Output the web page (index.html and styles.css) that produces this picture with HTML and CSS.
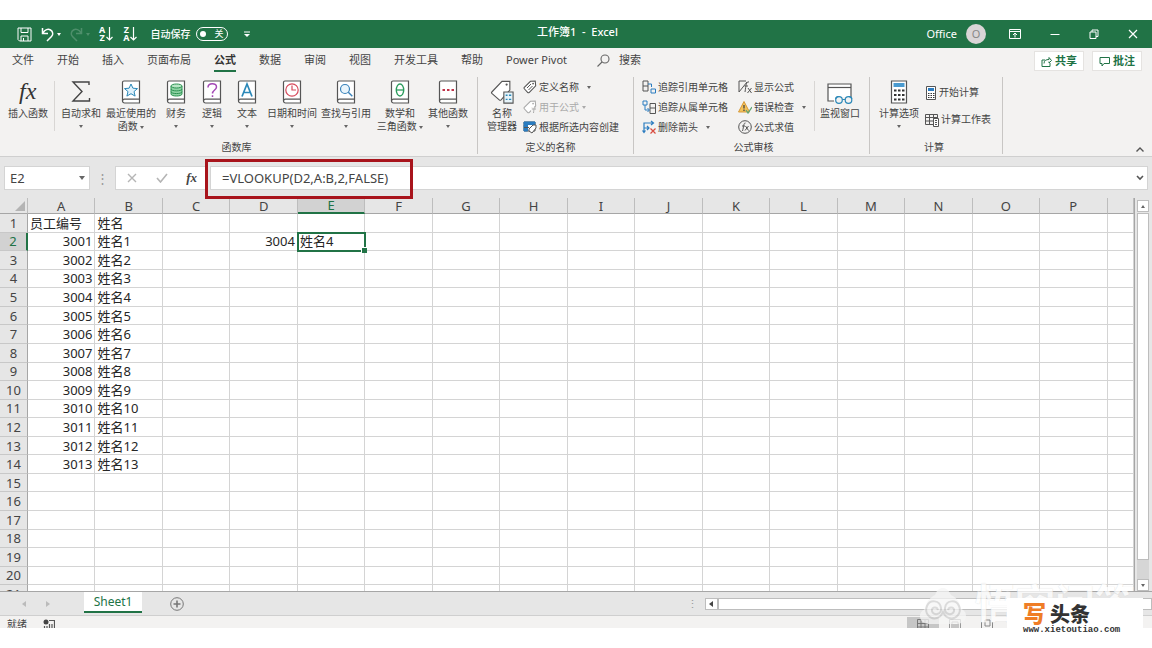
FILE: index.html
```html
<!DOCTYPE html>
<html lang="zh-CN">
<head>
<meta charset="utf-8">
<title>工作簿1 - Excel</title>
<link rel="stylesheet" href="styles.css">
</head>
<body>
<svg class="defs" aria-hidden="true">
  <symbol id="book" viewBox="0 0 20 24"><path d="M1.500 2.500a1.500 1.500 0 0 1 1.500-1.500h15.500v22H3.500a2 2 0 0 1-2-2z" fill="#fff" stroke="#555" stroke-width="1.200"/><path d="M1.500 21a2 2 0 0 1 2-1.800h15" fill="none" stroke="#555" stroke-width="1.200"/></symbol>
  <symbol id="tag" viewBox="0 0 16 16"><path d="M1.500 8.500 8.500 1.500l5.500-.3.500 5.500-7.500 7.600c-.6.500-1 .5-1.500 0L1.500 10c-.5-.5-.5-1 0-1.500z" fill="#fff" stroke="currentColor" stroke-width="1.200"/><circle cx="11.500" cy="4" r="1" fill="currentColor"/></symbol>
</svg>
<main class="app">
  <header class="titlebar">
    <div class="quick">
      <button class="tb" aria-label="保存"><svg width="15" height="15" viewBox="0 0 15 15" fill="none" stroke="#fff"><path d="M1 1h13v13H2.500L1 12.500zM4 1v4.500h7V1M4 14V9h7v5M6.500 14v-3"/></svg></button>
      <button class="tb" aria-label="撤消"><svg width="13" height="15" viewBox="0 0 13 15" fill="none" stroke="#fff" stroke-width="1.500"><path d="M1.500 1v5.500H7M2 6c2-3.500 5-4.500 7.500-3s3 4.500 1 6.500L6 14"/></svg><i class="caret"></i></button>
      <button class="tb faded" aria-label="恢复"><svg width="13" height="15" viewBox="0 0 13 15" fill="none" stroke="#fff" stroke-width="1.500"><path d="M11.500 1v5.500H6M11 6C9 2.500 6 1.500 3.500 3s-3 4.500-1 6.500L7 14"/></svg><i class="caret"></i></button>
      <button class="tb sort" aria-label="升序"><span class="letters"><b>A</b><b>Z</b></span><svg width="7" height="14" viewBox="0 0 7 14" fill="none" stroke="#fff" stroke-width="1.200"><path d="M3.500 0v13M.5 10l3 3 3-3"/></svg></button>
      <button class="tb sort" aria-label="降序"><span class="letters"><b>Z</b><b>A</b></span><svg width="7" height="14" viewBox="0 0 7 14" fill="none" stroke="#fff" stroke-width="1.200"><path d="M3.500 0v13M.5 10l3 3 3-3"/></svg></button>
      <span class="autosave">自动保存</span>
      <button class="switch" role="switch" aria-checked="false" aria-label="自动保存"><i class="knob"></i><span>关</span></button>
      <button class="tb more" aria-label="自定义"><svg width="6" height="7" viewBox="0 0 6 7"><path d="M0 1h6" stroke="#fff"/><path d="M0 3h6L3 6z" fill="#fff"/></svg></button>
    </div>
    <h1 class="doc">工作簿1&nbsp; -&nbsp; Excel</h1>
    <div class="window">
      <span>Office</span><span class="avatar">O</span>
      <button class="tb" aria-label="功能区显示选项"><svg width="12" height="10" viewBox="0 0 12 10" fill="none" stroke="#fff"><path d="M.5.5h11v9H.5zM.5 2.500h11M6 8.500v-4M4 6l2-2 2 2"/></svg></button>
      <button class="tb" aria-label="最小化"><svg width="10" height="10" viewBox="0 0 10 10" stroke="#fff"><path d="M.5 5.500h9"/></svg></button>
      <button class="tb" aria-label="还原"><svg width="10" height="10" viewBox="0 0 10 10" fill="none" stroke="#fff"><path d="M1 3h6v6.500H1zM3 3V1h6v6.500H7"/></svg></button>
      <button class="tb" aria-label="关闭"><svg width="10" height="10" viewBox="0 0 10 10" stroke="#fff" stroke-width="1.200"><path d="m1 1 8 8M9 1 1 9"/></svg></button>
    </div>
  </header>

  <nav class="tabs">
    <button>文件</button><button>开始</button><button>插入</button><button>页面布局</button><button class="active">公式</button><button>数据</button><button>审阅</button><button>视图</button><button>开发工具</button><button>帮助</button><button>Power Pivot</button>
    <button class="search"><svg width="13" height="13" viewBox="0 0 13 13" fill="none" stroke="#666" stroke-width="1.100"><circle cx="8" cy="5" r="4"/><path d="m5 8-4.500 4.500"/></svg>搜索</button>
    <div class="share">
      <button><svg width="11" height="11" viewBox="0 0 11 11" fill="none" stroke="#217346"><path d="M4 4H1v6.500h8V7M3 7.500c0-3 2-4 5-4V1.500l2.500 3L8 7V5.500"/></svg>共享</button>
      <button><svg width="11" height="11" viewBox="0 0 11 11" fill="none" stroke="#217346"><path d="M1 1.500h9.500v6H5l-2 2.500V7.500H1z"/></svg>批注</button>
    </div>
  </nav>

  <section class="ribbon">
    <div class="group library">
      <div class="tools">
        <button class="big w50"><svg width="26" height="24" viewBox="0 0 26 24"><text x="4" y="19" class="fx-big">fx</text></svg><span>插入函数</span></button>
        <i class="rule"></i>
        <button class="big w50"><svg width="20" height="24" viewBox="0 0 20 24" fill="none" stroke="#444" stroke-width="1.400"><path d="M18 5V2H2l9 9.500L2 21h16.500v-3"/></svg><span>自动求和</span><i class="caret"></i></button>
        <button class="big w50"><svg width="20" height="24"><use href="#book"/><path d="m10 4 1.900 4.200 4.600.4-3.500 3 1.100 4.500-4.100-2.400L5.900 16.100 7 11.600l-3.500-3 4.600-.4z" fill="#dff1fb" stroke="#2b88b8"/></svg><span>最近使用的<br>函数 <i class="caret inline"></i></span></button>
        <button class="big w40"><svg width="20" height="24"><use href="#book"/><path d="M5 6v8c0 2.700 11 2.700 11 0V6" fill="#8fd3a4" stroke="#2a9150"/><ellipse cx="10.500" cy="6" rx="5.500" ry="2" fill="#b8e6c5" stroke="#2a9150"/><path d="M5 9c0 2.500 11 2.500 11 0M5 11.700c0 2.500 11 2.500 11 0" fill="none" stroke="#2a9150"/></svg><span>财务</span><i class="caret"></i></button>
        <button class="big w32"><svg width="20" height="24"><use href="#book"/><path d="M6 7.500c0-5 8.500-5 8.500-.5 0 3-4 3-4 6.500M10.500 15.200v1.800" fill="none" stroke="#a348b5" stroke-width="1.500"/></svg><span>逻辑</span><i class="caret"></i></button>
        <button class="big w38"><svg width="20" height="24"><use href="#book"/><path d="m5 16.500 5-12.500 5 12.500M6.700 12.500h6.600" fill="none" stroke="#2b88b8" stroke-width="1.700"/></svg><span>文本</span><i class="caret"></i></button>
        <button class="big w52"><svg width="20" height="24"><use href="#book"/><circle cx="10" cy="10" r="6.200" fill="none" stroke="#d64b5c" stroke-width="1.200"/><path d="M10 5.500V10h4" fill="none" stroke="#d64b5c" stroke-width="1.200"/></svg><span>日期和时间</span><i class="caret"></i></button>
        <button class="big w56"><svg width="20" height="24"><use href="#book"/><circle cx="9" cy="9" r="4.500" fill="#e9f5fc" stroke="#3a83ba" stroke-width="1.200"/><path d="m12.300 12.300 4 4" stroke="#3a83ba" stroke-width="1.400"/></svg><span>查找与引用</span><i class="caret"></i></button>
        <button class="big w52"><svg width="20" height="24"><use href="#book"/><ellipse cx="10" cy="10" rx="3.700" ry="6" fill="none" stroke="#2a9b5c" stroke-width="1.400"/><path d="M6.500 10h7" stroke="#2a9b5c" stroke-width="1.300"/></svg><span>数学和<br>三角函数 <i class="caret inline"></i></span></button>
        <button class="big w44"><svg width="20" height="24"><use href="#book"/><path d="M4.500 10h2.500M9 10h2.500M13.500 10H16" stroke="#c0344a" stroke-width="2"/></svg><span>其他函数</span><i class="caret"></i></button>
      </div>
      <h2>函数库</h2>
    </div>
    <div class="group names">
      <div class="tools">
        <button class="big w40"><svg width="28" height="26" viewBox="0 0 28 26"><path d="M3 13 14 1.500h8.500V11L13 21.500c-.7.600-1.300.6-2 0l-8-7c-.5-.5-.5-1 0-1.500z" fill="#fff" stroke="#555" stroke-width="1.200"/><circle cx="19" cy="5" r="1.200" fill="#555"/><path d="M16 13h10v12H16z" fill="#e6f4fa" stroke="#555" stroke-width="1.200"/><path d="M18 16.500h2m1.500 0H24m-6 4.500h2m1.500 0H24" stroke="#2b88b8" stroke-width="1.400"/></svg><span>名称<br>管理器</span></button>
        <div class="stack">
          <button class="small"><svg width="14" height="14" color="#555"><use href="#tag"/><path d="m4 8 4-4M5.500 10l4-4" stroke="#555"/></svg>定义名称<i class="caret gap"></i></button>
          <button class="small" disabled><svg width="14" height="14" color="#aaa"><use href="#tag"/><path d="M8 7h6v7H8z" fill="#f3f2f1"/><path d="M13 7c-2-.5-2 2-2.500 6M9 9h4" stroke="#aaa" fill="none"/></svg>用于公式<i class="caret near"></i></button>
          <button class="small"><svg width="14" height="14" fill="none" stroke="#555"><path d="M1 2h11v9H1z" fill="#fff"/><path d="M1 2h11v2.500H1zM1 5h3.500v6H1z" fill="#2b7cc0" stroke="#2b7cc0"/><path d="m6 9 4-4h3v3l-4 5-3-2z" fill="#fff"/><path d="M1 7.500h5"/></svg>根据所选内容创建</button>
        </div>
      </div>
      <h2>定义的名称</h2>
    </div>
    <div class="group audit">
      <div class="tools">
        <div class="stack">
          <button class="small"><svg width="14" height="14" fill="none" stroke="#555"><path d="M1 1h5v10H1zM1 6h5"/><path d="M9 9h4.500v4H9z" stroke="#2b7cc0"/><path d="M6 4h3.500v3" stroke="#2b7cc0"/></svg>追踪引用单元格</button>
          <button class="small"><svg width="14" height="14" fill="none" stroke="#555"><path d="M8 3.500h5.500v10H8zM8 8h5.500"/><path d="M1 1h4v4H1zM3 5v5h4M5.500 8 7.500 10l-2 2" stroke="#2b7cc0"/></svg>追踪从属单元格</button>
          <button class="small"><svg width="14" height="14" fill="none" stroke="#2b7cc0" stroke-width="1.200"><path d="M2 12V3h9M9 1l2.500 2L9 5M2 8h5M5 6l2 2-2 2M.5 10.500 2 12.500l1.500-2"/><path d="m8.500 8.500 5 5m0-5-5 5" stroke="#d84b3e"/></svg>删除箭头<i class="caret gap"></i></button>
        </div>
        <div class="stack">
          <button class="small"><svg width="14" height="14" fill="none" stroke="#555"><path d="M8 1H1v11l8-10"/><path d="M11 2c-3-1-3 4-4 10M6.500 6H10M10 8l3.500 5m0-5L9.500 13"/></svg>显示公式</button>
          <button class="small"><svg width="14" height="14" fill="none"><path d="M6 1.500 11.500 12h-11z" fill="#f4c25a" stroke="#d79a3a"/><path d="M6 5v3.500M6 9.500V11" stroke="#444" stroke-width="1.300"/><path d="m8 10 2 3 4-6" stroke="#62a575" stroke-width="1.300"/></svg>错误检查<i class="caret gap"></i></button>
          <button class="small"><svg width="14" height="14" fill="none" stroke="#555"><circle cx="7" cy="7" r="6.300"/><path d="M7.500 3C5.500 2.500 5.800 7 4.500 11M4 6h3M7.500 6l3 4.500m0-4.500-3.500 4.500"/></svg>公式求值</button>
        </div>
        <i class="rule"></i>
        <button class="big w50"><svg width="28" height="24" viewBox="0 0 28 24" fill="none" stroke="#555" stroke-width="1.200"><path d="M8 21H2V4h23v13" fill="#fff"/><path d="M2 7.500h23"/><path d="M9 17h17v6H9z" fill="#f3f2f1" stroke="none"/><g stroke="#2b88b8"><circle cx="13" cy="20" r="3.300"/><circle cx="22.500" cy="20" r="3.300"/><path d="M16.300 19.500h2.900M9.700 19c0-2 1-2.500 3-2.500M25.800 19c0-2-1-2.500-3-2.500"/></g></svg><span>监视窗口</span></button>
      </div>
      <h2>公式审核</h2>
    </div>
    <div class="group calc">
      <div class="tools">
        <button class="big w44"><svg width="18" height="24" viewBox="0 0 18 24"><path d="M1.500 1h15v22h-15z" fill="#fff" stroke="#555" stroke-width="1.200"/><path d="M3.500 3h11v4h-11z" fill="#4a9bd0"/><path d="M4 10.500h2.500m1.500 0h2.500m1.500 0h2.500M4 15h2.500m1.500 0h2.500m1.500 0h2.500M4 19.500h2.500m1.500 0h2.500m1.500 0h2.500" stroke="#333" stroke-width="2"/></svg><span>计算选项</span><i class="caret"></i></button>
        <div class="stack two">
          <button class="small"><svg width="12" height="14"><path d="M1.500.5h9v13h-9z" fill="#fff" stroke="#555"/><path d="M3 2h6v3H3z" fill="#2b7cc0"/><path d="M3 7.500h1.500m1 0H7m1 0h1.500M3 9.500h1.500m1 0H7m1 0h1.500M3 11.500h1.500m1 0H7m1 0h1.500" stroke="#333"/></svg>开始计算</button>
          <button class="small"><svg width="14" height="14" fill="none" stroke="#555"><path d="M.5 1.500h12v10H.5zM.5 4.500h12M.5 8h8M4.500 1.500v10M8.500 1.500v10"/><path d="M8.500 5.500h5v8h-5z" fill="#fff"/><path d="M10 7.500h2M10 9.500h2M10 11.500h2"/></svg>计算工作表</button>
        </div>
      </div>
      <h2>计算</h2>
    </div>
    <button class="collapse" aria-label="折叠功能区"><svg width="8" height="5" viewBox="0 0 8 5" fill="none" stroke="#555" stroke-width="1.400"><path d="m.5 4.500 3.500-3.500 3.500 3.500"/></svg></button>
  </section>

  <section class="formula-bar">
    <label class="namebox"><input value="E2" aria-label="名称框"><i class="caret"></i></label>
    <span class="grip">⋮</span>
    <div class="actions">
      <button aria-label="取消"><svg width="10" height="10" viewBox="0 0 10 10" stroke="#b5b5b5" stroke-width="1.400"><path d="m1 1 8 8M9 1 1 9"/></svg></button>
      <button aria-label="输入"><svg width="12" height="10" viewBox="0 0 12 10" fill="none" stroke="#b5b5b5" stroke-width="1.600"><path d="m1 5 3.500 4L11 1"/></svg></button>
      <button class="fx" aria-label="插入函数">fx</button>
    </div>
    <div class="formula"><input value="=VLOOKUP(D2,A:B,2,FALSE)" aria-label="编辑栏"><svg width="8" height="6" viewBox="0 0 8 6" fill="none" stroke="#555" stroke-width="1.600"><path d="m1 1 3 3 3-3"/></svg><i class="highlight"></i></div>
  </section>

  <section class="sheet">
    <div class="cells">
      <table>
        <colgroup id="cols"><col class="rowcol"></colgroup>
        <thead><tr id="head"><th class="corner"><i></i></th></tr></thead>
        <tbody id="body"></tbody>
      </table>
    </div>
    <div class="vscroll"><button aria-label="向上"><i class="caret up"></i></button><i class="thumb"></i><span class="track"></span><button aria-label="向下"><i class="caret"></i></button></div>
  </section>

  <footer class="sheetbar">
    <div class="sheet-tabs"><button class="arrow" aria-label="上一个"><i class="side left"></i></button><button class="arrow" aria-label="下一个"><i class="side right"></i></button><button class="sheet-tab">Sheet1</button><button class="add" aria-label="新工作表"><svg width="14" height="14" viewBox="0 0 14 14" fill="none" stroke="#777"><circle cx="7" cy="7" r="6.300"/><path d="M7 3.500v7M3.500 7h7" stroke-width="1.600"/></svg></button></div>
    <div class="hscroll"><span class="grip">⋮</span><button aria-label="向左"><i class="side left dark"></i></button><i class="hthumb"></i></div>
  </footer>
  <div class="status">
    <span>就绪</span><svg width="12" height="12" viewBox="0 0 12 12"><circle cx="3" cy="3" r="2.500" fill="#444"/><path d="M6 1.500h5.500V11M1.500 7v4M4 7v4M6.500 5v6M9 5v6" fill="none" stroke="#555" stroke-width="1.200"/></svg>
    <div class="views">
      <span class="view on"><svg width="12" height="12" fill="none" stroke="#777"><path d="M.5.5h11v11H.5zM.5 4.500h11M.5 8h11M4 .5v11M8 .5v11"/></svg></span>
      <span class="view"><svg width="12" height="12" fill="none" stroke="#999"><path d="M.5.5h11v11H.5zM3 3h6v8H3zM5 5v6M7 5v6"/></svg></span>
      <span class="view"><svg width="12" height="12" fill="none" stroke="#888"><path d="M.5 12V3M4 1h5v6H4zM11.500 12V3M3 9v3"/></svg></span>
    </div>
  </div>
</main>
<div class="watermark"><svg width="52" height="42" viewBox="0 0 50 42"><path d="M2 32c0-4 3-6 5-7 1-8 6-12 10-14 2-5 4-7 8-7s6 3 8 7c5 2 9 7 10 14 3 1 5 3 5 7 0 6-5 8-10 8H12c-5 0-10-2-10-8z" fill="#f6f6f6"/><path d="M20 26c-1-4-7-3-6 1 1 5 10 4 9-3C22 16 12 15 9 22s3 14 10 12c4-1 5-4 6-6 1 2 2 5 6 6 7 2 13-5 10-12s-13-6-14 2c-1 7 8 8 9 3 1-4-5-5-6-1" fill="none" stroke="#d0d0d0" stroke-width="2"/></svg><span>悟空问答</span></div>
<aside class="brand"><p class="brand-name"><b>写</b>头条</p><p class="brand-url">www.xietoutiao.com</p></aside>
<script src="sheet.js"></script>
</body>
</html>
```
FILE: styles.css
```css
* { box-sizing: border-box; }
body { margin: 0; background: #fff; color: #444; font: 11px/16px "Noto Sans", "Noto Sans CJK SC", sans-serif; position: relative; }
button, input { font: inherit; color: inherit; border: 0; background: none; padding: 0; margin: 0; }
h1, h2, p { margin: 0; font-weight: normal; }
svg { flex: none; display: block; }
.defs { position: absolute; width: 0; height: 0; }
.app { display: flex; flex-direction: column; height: 100vh; padding: 20px 0; }

.caret { display: block; border: 2px solid transparent; border-top: 3px solid #666; border-bottom: 0; width: 4px; }
.caret.up { border-top: 0; border-bottom: 3px solid #666; }
.caret.inline { display: inline-block; vertical-align: middle; }
.caret.gap { margin-left: 6px; }
.caret.near { margin-left: 1px; border-top-color: #aaa; }

.titlebar { display: grid; grid-template-columns: 1fr auto 1fr; align-items: center; height: 28px; flex: none; background: #217346; color: #fff; padding: 0 14px 0 17px; }
.quick, .window { display: flex; align-items: center; }
.tb { display: flex; align-items: center; gap: 3px; }
.tb .caret { border-top-color: #fff; }
.quick { gap: 9px; }
.faded { opacity: .2; }
.sort { gap: 1px; margin-right: 1px; }
.letters { display: flex; flex-direction: column; font-size: 9px; line-height: 8px; }
.autosave { font-size: 10px; font-weight: 500; margin-left: 3px; }
.switch { display: flex; align-items: center; justify-content: space-between; width: 32px; height: 14px; margin-left: -3px; padding: 0 4px 0 3px; border: 1px solid #fff; border-radius: 7px; font-size: 9px; line-height: 12px; }
.knob { width: 6px; height: 6px; border-radius: 50%; background: #fff; }
.more { margin-left: 7px; }
.doc { font-size: 11px; font-weight: 500; line-height: 24px; align-self: start; }
.window { justify-content: flex-end; gap: 29px; }
.window > span:first-child { margin-right: -20px; }
.avatar { width: 20px; height: 20px; border-radius: 50%; background: #d9d5d6; color: #888; text-align: center; line-height: 20px; margin-right: -6px; }

.tabs { display: flex; gap: 23px; height: 26px; flex: none; background: #f3f2f1; padding: 0 10px 0 12px; }
.tabs > button { height: 24px; white-space: nowrap; border-bottom: 2px solid transparent; padding-top: 2px; line-height: 20px; }
.tabs .active { font-weight: bold; color: #333; border-bottom-color: #217346; }
.tabs .search { display: flex; align-items: center; gap: 9px; margin-left: 7px; }
.share { display: flex; gap: 8px; margin-left: auto; padding-top: 3px; }
.share button { display: flex; align-items: center; justify-content: center; gap: 3px; width: 50px; height: 20px; background: #fff; border: 1px solid #e5e3e1; color: #217346; font-weight: bold; }

.ribbon { display: flex; height: 83px; flex: none; background: #f3f2f1; border-bottom: 1px solid #cfcfcf; font-size: 10px; line-height: 13px; padding: 3px 8px 2px 3px; }
.group { display: flex; flex-direction: column; justify-content: space-between; border-right: 1px solid #c8c6c4; }
.group h2 { font-size: 10px; line-height: 14px; text-align: center; }
.tools { display: flex; height: 60px; }
.library { padding-right: 7px; }
.names { padding: 0 14px 0 4px; }
.audit { padding: 0 4px 0 8px; }
.calc { padding: 0 11px 0 7px; }
.big { display: flex; flex-direction: column; align-items: center; flex: none; padding-top: 3px; white-space: nowrap; }
.big svg { height: 24px; margin-bottom: 3px; }
.big > .caret { margin-top: 5px; }
.w32 { width: 32px; }
.w38 { width: 38px; }
.w40 { width: 40px; }
.w44 { width: 44px; }
.w50 { width: 50px; }
.w52 { width: 52px; }
.w56 { width: 56px; }
.fx-big { font: italic 24px "Liberation Serif", serif; fill: #333; }
.rule { width: 1px; margin: 4px 1px 6px; background: #d8d6d4; }
.stack { display: flex; flex-direction: column; align-items: flex-start; }
.stack + .stack { margin-left: 10px; }
.stack + .rule { margin-left: 8px; margin-right: 0; }
.names .stack { margin-left: 1px; }
.calc .stack { margin-left: 4px; padding-top: 2px; }
.small { display: flex; align-items: center; gap: 2px; height: 20px; white-space: nowrap; }
.two .small { height: 27px; }
.small:disabled { color: #aaa; }
.collapse { align-self: flex-end; margin-left: auto; padding-bottom: 2px; }

.formula-bar { display: flex; align-items: center; height: 41px; flex: none; background: #e6e6e6; padding: 0 4px; font-size: 13px; }
.namebox { display: flex; align-items: center; width: 86px; height: 24px; background: #fff; border: 1px solid #d4d4d4; padding: 0 4px 0 5px; }
.namebox input { flex: 1; min-width: 0; }
.namebox .caret { border-width: 4px 3px 0; width: 6px; }
.grip { width: 25px; text-align: center; color: #999; }
.actions { display: flex; align-items: center; justify-content: space-between; width: 91px; height: 24px; background: #fff; border: 1px solid #d4d4d4; padding: 0 8px 0 11px; }
.fx { font: italic bold 13px "Liberation Serif", serif; }
.formula { position: relative; display: flex; align-items: center; flex: 1; height: 24px; margin-left: 4px; background: #fff; border: 1px solid #d4d4d4; padding: 0 3px 0 11px; }
.formula input { flex: 1; min-width: 0; }
.highlight { position: absolute; left: -6px; top: -8px; width: 208px; height: 40px; border: 3px solid #a8141c; pointer-events: none; }

.sheet { display: flex; flex: 1; min-height: 0; background: #e6e6e6; }
.cells { flex: 1; overflow: hidden; background: #fff; border-right: 1px solid #a6a6a6; }
table { table-layout: fixed; width: 100%; height: 406px; border-collapse: separate; border-spacing: 0; font-size: 13px; line-height: 16px; color: #262626; }
.rowcol { width: 28px; }
.datacol { width: 5.95%; }
th, td { padding: 0 2px; font-weight: normal; border-right: 1px solid #d4d4d4; border-bottom: 1px solid #d4d4d4; white-space: nowrap; overflow: hidden; }
td { text-align: left; }
td.num { text-align: right; }
thead th { height: 16px; line-height: 14px; background: #e6e6e6; border-right-color: #bdbdbd; border-bottom-color: #a6a6a6; color: #444; }
tbody th { height: 18px; background: #e6e6e6; border-right-color: #a6a6a6; border-bottom-color: #c8c8c8; color: #444; }
thead th.on { background: #d2d2d2; color: #217346; border-bottom: 2px solid #217346; }
tbody th.on { background: #d2d2d2; color: #217346; border-right: 2px solid #217346; }
.corner i { display: block; margin-left: auto; width: 0; border: 5px solid #b4b4b4; border-top-color: transparent; border-left-color: transparent; }
td.selected { position: relative; overflow: visible; outline: 2px solid #217346; outline-offset: -1px; }
td.selected::after { content: ""; position: absolute; right: -3px; bottom: -3px; width: 5px; height: 5px; background: #217346; border: 1px solid #fff; border-width: 1px 0 0 1px; }
.vscroll { display: flex; flex-direction: column; width: 17px; padding: 2px 3px 0 2px; }
.vscroll button { display: grid; place-items: center; height: 12px; background: #fff; border: 1px solid #bdbdbd; }
.thumb { flex: 1; background: #fff; border: 1px solid #bdbdbd; margin-top: 1px; }
.track { height: 19px; background: #d6d6d6; }

.sheetbar { display: flex; justify-content: space-between; height: 25px; flex: none; background: #e6e6e6; border-top: 1px solid #a6a6a6; border-bottom: 1px solid #cfcfcf; }
.sheet-tabs, .hscroll { display: flex; align-items: center; }
.sheet-tabs { padding-left: 22px; }
.side { display: block; width: 4px; border: 3px solid transparent; }
.side.left { border-right: 4px solid #bbb; border-left: 0; }
.side.right { border-left: 4px solid #bbb; border-right: 0; }
.side.dark { border-right-color: #444; }
.arrow { margin-right: 20px; }
.sheet-tab { align-self: flex-start; width: 58px; height: 21px; margin-left: 14px; background: #fff; color: #217346; border-bottom: 2px solid #217346; font-size: 12px; }
.add { margin-left: 28px; }
.hscroll { width: 41%; }
.hscroll button { display: grid; place-items: center; width: 13px; height: 12px; background: #fff; border: 1px solid #bdbdbd; }
.hthumb { flex: 1; height: 12px; background: #fff; border: 1px solid #bdbdbd; }
.status { display: flex; gap: 16px; height: 12px; flex: none; overflow: hidden; background: #f3f2f1; padding: 1px 149px 0 7px; font-size: 10px; line-height: 15px; }
.status > svg { margin-top: 2px; }
.views { display: flex; margin-left: auto; }
.view { width: 32px; padding: 2px 0 0 10px; }
.view.on { background: #c6c6c6; }

.watermark { position: absolute; right: 17px; bottom: 22px; display: flex; align-items: flex-end; gap: 6px; height: 44px; overflow: hidden; color: #fff; font-size: 40px; font-weight: bold; line-height: 46px; text-shadow: 0 0 1px #ccc; opacity: .75; }
.brand { position: absolute; right: 9px; bottom: 14px; width: 136px; height: 36px; background: #fff; padding: 4px 0 0 16px; color: #333; }
.brand-name { font-size: 20px; line-height: 22px; font-weight: 900; }
.brand-name b { font-size: 23px; color: #ef7d26; font-weight: 900; margin-right: 4px; }
.brand-url { font: bold 9px/9px "Liberation Mono", monospace; white-space: nowrap; }
```
FILE: sheet.js
```js
const letters = "ABCDEFGHIJKLMNOP".split("");
const cells = { A1: "员工编号", B1: "姓名", D2: 3004, E2: "姓名4" };
for (let i = 1; i <= 13; i++) {
  cells["A" + (i + 1)] = 3000 + i;
  cells["B" + (i + 1)] = "姓名" + i;
}
const selected = "E2";
const add = (parent, tag, text, cls) => {
  const el = document.createElement(tag);
  if (text !== undefined) el.textContent = text;
  if (cls) el.className = cls;
  parent.append(el);
  return el;
};
const cols = document.getElementById("cols");
const head = document.getElementById("head");
const body = document.getElementById("body");
letters.forEach(l => {
  add(cols, "col", undefined, "datacol");
  add(head, "th", l, l === selected[0] ? "on" : "");
});
add(cols, "col");
add(head, "th");
for (let r = 1; r <= 21; r++) {
  const row = add(body, "tr");
  add(row, "th", r, String(r) === selected.slice(1) ? "on" : "");
  letters.forEach(l => {
    const value = cells[l + r];
    const cls = l + r === selected ? "selected" : typeof value === "number" ? "num" : "";
    add(row, "td", value, cls);
  });
  add(row, "td");
}
```
